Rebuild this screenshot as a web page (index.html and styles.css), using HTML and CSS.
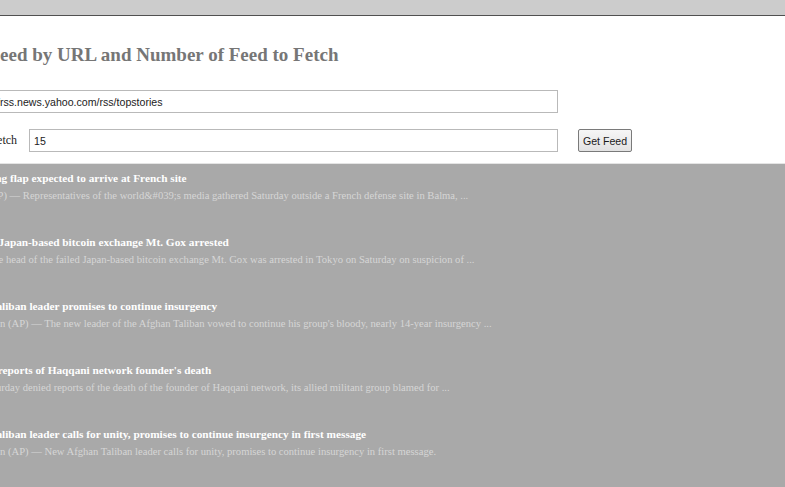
FILE: index.html
```html
<!DOCTYPE html>
<html lang="en">
<head>
<meta charset="utf-8">
<title>Feed by URL</title>
<link rel="stylesheet" href="styles.css">
</head>
<body>
<div class="topbar"></div>
<section class="form">
  <h2 class="form-title">Feed by URL and Number of Feed to Fetch</h2>
  <div class="row">
    <input class="field field-url" type="text" value="http://rss.news.yahoo.com/rss/topstories">
  </div>
  <div class="row row-count">
    <label class="label" for="count">Number of Feed to Fetch</label>
    <input class="field field-count" id="count" type="text" value="15">
    <button class="btn" type="button">Get Feed</button>
  </div>
</section>
<section class="feed">
  <div class="feed-list">
    <div class="item">
      <div class="item-title">Boeing 777 wing flap expected to arrive at French site</div>
      <div class="item-desc">TOULOUSE (AP) — Representatives of the world&amp;#039;s media gathered Saturday outside a French defense site in Balma, ...</div>
    </div>
    <div class="item">
      <div class="item-title">Head of failed Japan-based bitcoin exchange Mt. Gox arrested</div>
      <div class="item-desc">Tokyo (AP) - The head of the failed Japan-based bitcoin exchange Mt. Gox was arrested in Tokyo on Saturday on suspicion of ...</div>
    </div>
    <div class="item">
      <div class="item-title">New Afghan Taliban leader promises to continue insurgency</div>
      <div class="item-desc">Herat Afghanistan (AP) — The new leader of the Afghan Taliban vowed to continue his group's bloody, nearly 14-year insurgency ...</div>
    </div>
    <div class="item">
      <div class="item-title">Officials deny reports of Haqqani network founder's death</div>
      <div class="item-desc">Pakistan, on Saturday denied reports of the death of the founder of Haqqani network, its allied militant group blamed for ...</div>
    </div>
    <div class="item">
      <div class="item-title">New Afghan Taliban leader calls for unity, promises to continue insurgency in first message</div>
      <div class="item-desc">Herat Afghanistan (AP) — New Afghan Taliban leader calls for unity, promises to continue insurgency in first message.</div>
    </div>
  </div>
</section>
</body>
</html>
```
FILE: styles.css
```css
html, body {
  margin: 0;
  padding: 0;
}

body {
  min-height: 100vh;
  display: flex;
  flex-direction: column;
  overflow: hidden;
  background: #ffffff;
  font-family: "Liberation Serif", "Times New Roman", serif;
}

.topbar {
  height: 15px;
  background: #cccccc;
  border-bottom: 1px solid #505050;
  flex: none;
}

.form {
  flex: none;
  background: #ffffff;
  padding: 0 0 11px;
  border-bottom: 1px solid #e4e4e4;
}

.form-title {
  margin: 28px 0 0 -11.6px;
  font-size: 19px;
  line-height: 22px;
  font-weight: bold;
  color: #767676;
  white-space: nowrap;
}

.row {
  display: flex;
  align-items: center;
  margin-top: 24px;
}

.row-count {
  margin-top: 16px;
  margin-left: -103.6px;
}

.label {
  font-size: 12px;
  line-height: 14px;
  color: #222222;
  white-space: nowrap;
  margin: 0 12px 2px 0;
}

.field {
  box-sizing: border-box;
  height: 23px;
  padding: 0 4px;
  border: 1px solid #b9b9b9;
  border-radius: 0;
  background: #ffffff;
  font-family: "Liberation Sans", Arial, sans-serif;
  font-size: 10.6px;
  color: #222222;
  outline: none;
}

.field-url {
  margin-left: -31.5px;
  width: 589.5px;
}

.field-count {
  width: 529px;
}

.btn {
  box-sizing: border-box;
  margin-left: 20px;
  width: 54px;
  height: 23px;
  padding: 0;
  border: 1px solid #7a7a7a;
  border-radius: 2px;
  background: linear-gradient(#f6f6f6, #e2e2e2);
  font-family: "Liberation Sans", Arial, sans-serif;
  font-size: 10.6px;
  color: #1a1a1a;
}

.feed {
  flex: 1;
  background: #a9a9a9;
  padding-top: 7px;
}

.feed-list {
  margin-left: -72px;
}

.item {
  margin-bottom: 32px;
  white-space: nowrap;
}

.item-title {
  font-size: 11.3px;
  line-height: 15px;
  font-weight: bold;
  color: #ffffff;
}

.item-desc {
  margin-top: 2px;
  font-size: 10.6px;
  line-height: 15px;
  color: #d6d6d6;
}
```
